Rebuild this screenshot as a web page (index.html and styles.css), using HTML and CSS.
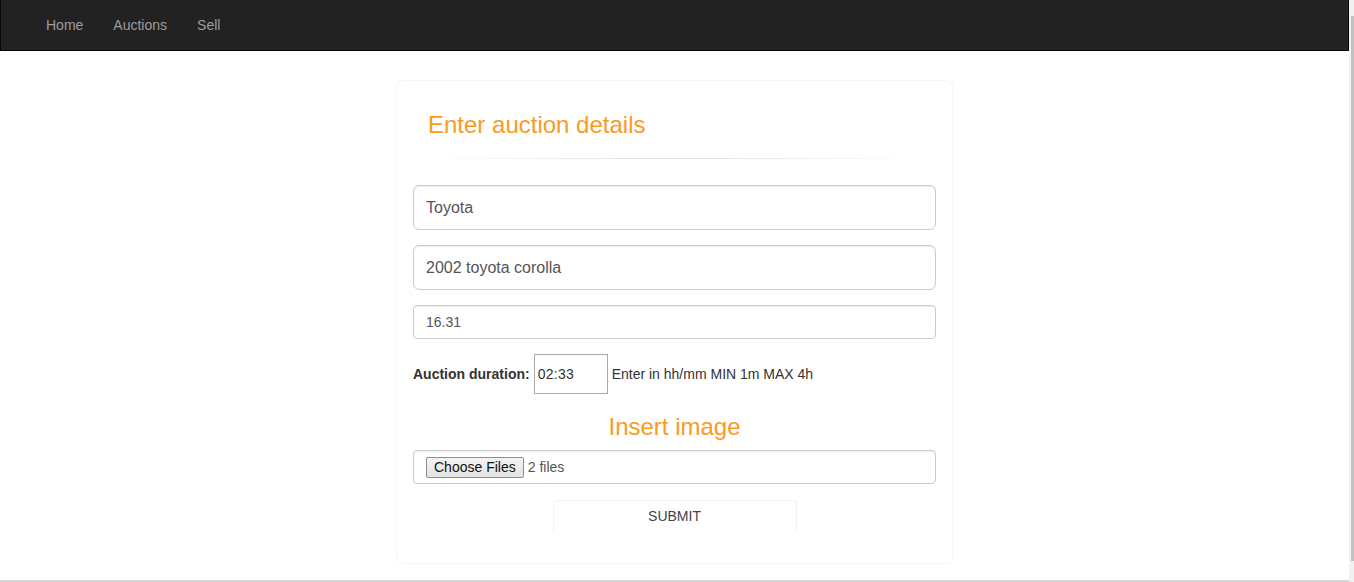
FILE: index.html
```html
<!DOCTYPE html>
<html>
<head>
<meta charset="utf-8">
<title>Sell</title>
<link rel="stylesheet" href="styles.css">
</head>
<body>
<div class="page">
  <nav class="navbar">
    <ul class="nav">
      <li><a href="#">Home</a></li>
      <li><a href="#">Auctions</a></li>
      <li><a href="#">Sell</a></li>
    </ul>
  </nav>
  <div class="card">
    <h3 class="title">Enter auction details</h3>
    <hr class="divider">
    <form class="form">
      <input class="field field-lg" type="text" value="Toyota">
      <input class="field field-lg" type="text" value="2002 toyota corolla">
      <input class="field" type="text" value="16.31">
      <div class="duration">
        <label class="dur-label">Auction duration:</label>
        <input class="time" type="text" value="02:33">
        <span class="hint">Enter in hh/mm MIN 1m MAX 4h</span>
      </div>
      <h3 class="title center">Insert image</h3>
      <div class="filebox">
        <button type="button" class="choose">Choose Files</button>
        <span class="files">2 files</span>
      </div>
      <div class="submit-row">
        <button type="button" class="submit">SUBMIT</button>
      </div>
    </form>
  </div>
</div>
<div class="scrollbar"><div class="thumb"></div></div>
</body>
</html>
```
FILE: styles.css
```css
* { box-sizing: border-box; }
html, body { margin: 0; padding: 0; }
body {
  display: flex;
  height: 582px;
  overflow: hidden;
  font-family: "Liberation Sans", Arial, Helvetica, sans-serif;
  font-size: 14px;
  color: #333;
  background: #fff;
}
.page {
  flex: 1;
  height: 582px;
  border-bottom: 2px solid #d6d6d6;
}
.scrollbar {
  width: 5px;
  background: #f1f1f1;
  padding-top: 16px;
}
.thumb {
  margin-left: 2px;
  height: 545px;
  background: #c1c1c1;
}
.navbar {
  height: 51px;
  background: #222;
  border: 1px solid #080808;
  border-top: 0;
}
.nav {
  list-style: none;
  margin: 0;
  padding: 0 0 0 30px;
  display: flex;
}
.nav a {
  display: block;
  padding: 15px 15px;
  line-height: 20px;
  color: #9d9d9d;
  text-decoration: none;
  font-size: 14px;
}
.card {
  width: 557px;
  margin: 29px auto 0;
  border: 1px solid #f6f6f6;
  border-radius: 6px;
  padding: 31px 16px 31px;
}
.title {
  margin: 0 0 0 15px;
  font-size: 24px;
  line-height: 26px;
  font-weight: 400;
  color: #fb9a1c;
}
.title.center {
  margin: 20px 0 10px;
  text-align: center;
}
.divider {
  margin: 20px 11px 26px 7px;
  border: 0;
  height: 1px;
  background-image: linear-gradient(to right, rgba(0,0,0,0), rgba(0,0,0,0.13), rgba(0,0,0,0));
}
.form { display: flex; flex-direction: column; }
.field {
  display: block;
  width: 100%;
  height: 34px;
  margin: 0 0 15px;
  padding: 0 12px;
  border: 1px solid #ccc;
  border-radius: 4px;
  box-shadow: inset 0 1px 1px rgba(0,0,0,.075);
  font-family: inherit;
  font-size: 14px;
  color: #555;
  background: #fff;
}
.field-lg {
  height: 45px;
  font-size: 16px;
  border-radius: 6px;
}
.duration {
  display: flex;
  align-items: center;
  height: 40px;
  gap: 4px;
}
.dur-label { font-weight: 700; color: #333; }
.time {
  width: 74px;
  height: 40px;
  border: 1px solid #a9a9a9;
  border-radius: 0;
  padding: 0 3px;
  font-family: inherit;
  font-size: 14px;
  color: #333;
  letter-spacing: 0.3px;
}
.hint { color: #333; }
.filebox {
  height: 34px;
  border: 1px solid #ccc;
  border-radius: 4px;
  box-shadow: inset 0 1px 1px rgba(0,0,0,.075);
  display: flex;
  align-items: center;
  padding: 0 12px;
  gap: 4px;
}
.choose {
  height: 21px;
  padding: 0 7px;
  border: 1px solid #8f8f8f;
  border-radius: 2px;
  background: linear-gradient(#f4f4f4, #e3e3e3);
  font-family: inherit;
  font-size: 14px;
  color: #111;
}
.files { color: #555; }
.submit-row {
  display: flex;
  justify-content: center;
  margin-top: 16px;
}
.submit {
  width: 244px;
  height: 32px;
  padding: 0;
  background: #fff;
  border: 1px solid #f3f3f3;
  border-bottom-color: transparent;
  border-radius: 3px 3px 0 0;
  font-family: inherit;
  font-size: 14px;
  color: #444;
}
```
